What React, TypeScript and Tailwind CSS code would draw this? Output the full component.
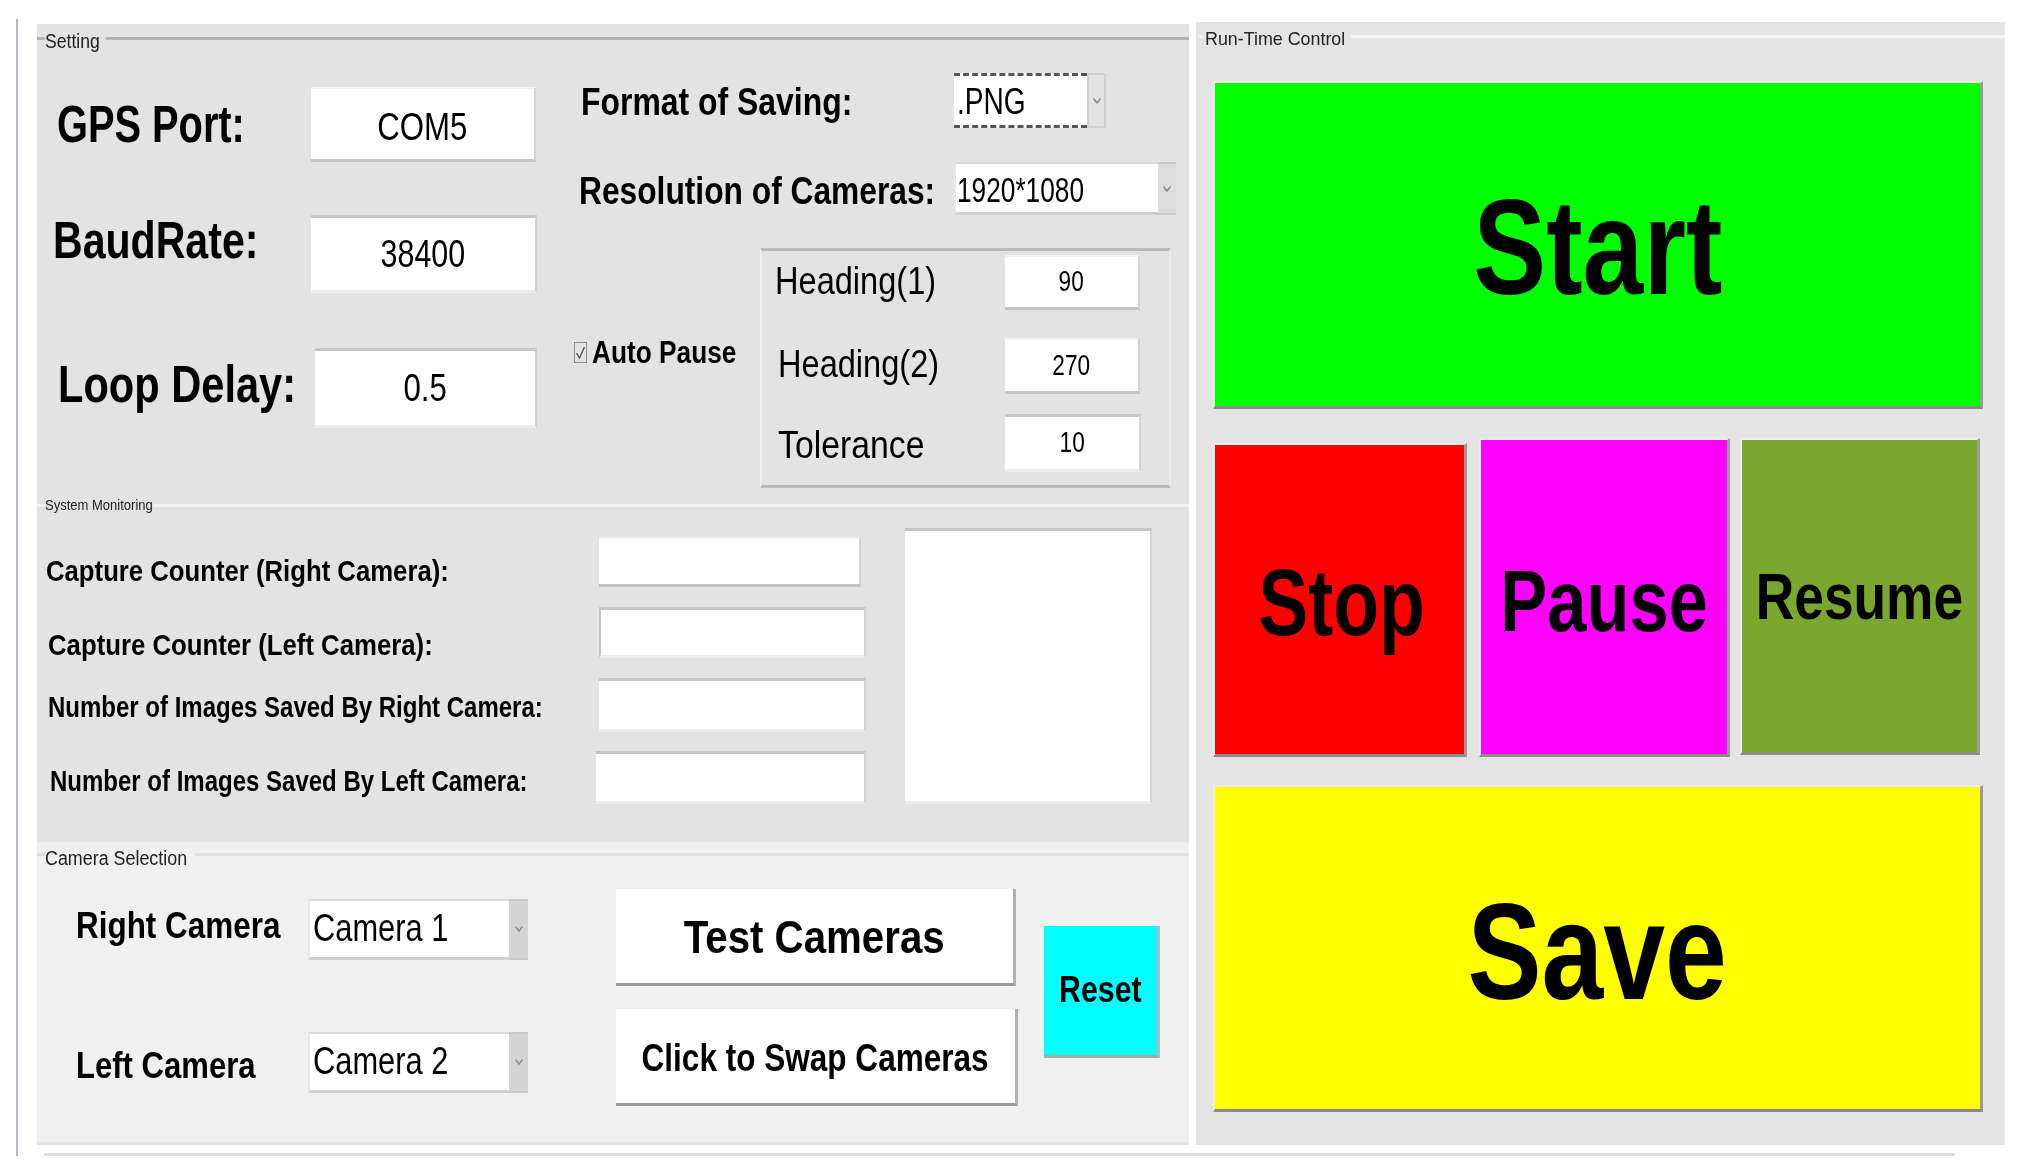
import React from "react";

const box = "bg-white border-b-[3px] border-r-2 border-b-[#c2c2c7] border-r-[#d2d2d6] border-t-2 border-t-[#f2f2f2]";
const boxTop = "bg-white border-t-[3px] border-r-2 border-t-[#c6c6ca] border-r-[#d2d2d6] border-b-[3px] border-b-[#ededed]";
const colorBtn = "flex items-center justify-center border-b-[3px] border-r-[3px] border-b-[#8a8a8a] border-r-[#9a9a9a] border-t-2 border-l-2 border-t-[#ededed] border-l-[#ededed] text-black font-bold whitespace-nowrap";

function Legend({ text, size, lead, className, line }: { text: string; size: string; lead: string; className: string; line: string }) {
  return (
    <div className={`flex items-center ${className}`}>
      <div className={`h-[3px] ${lead} ${line}`} />
      <span className={`whitespace-nowrap text-[#222] ${size}`}>{text}</span>
      <div className={`h-[3px] flex-1 ${line}`} />
    </div>
  );
}

function Chevron() {
  return (
    <svg width="10" height="8" viewBox="0 0 10 8" fill="none" stroke="#8a8a8a" strokeWidth="1.4">
      <path d="M1.5 1.5 L5 6 L8.5 1.5" />
    </svg>
  );
}

function Combo({ text, className, strip, textClass }: { text: string; className: string; strip: string; textClass: string }) {
  return (
    <div className={`flex ${className}`}>
      <div className="flex flex-1 items-center bg-white border-t-2 border-b-[3px] border-l-2 border-t-[#dcdcdc] border-b-[#d0d0d0] border-l-[#e8e8e8] pl-[3px]">
        <span className={`inline-block origin-left whitespace-nowrap ${textClass}`}>{text}</span>
      </div>
      <div className={`flex items-center justify-center border-y-2 border-y-[#c8c8c8] ${strip}`}>
        <Chevron />
      </div>
    </div>
  );
}

function Value({ text, className, textClass }: { text: string; className: string; textClass: string }) {
  return (
    <div className={`flex items-center justify-center ${className}`}>
      <span className={`inline-block whitespace-nowrap text-black ${textClass}`}>{text}</span>
    </div>
  );
}

export default function App() {
  return (
    <div className="relative flex h-[1171px] w-[2019px] overflow-hidden bg-white font-['Liberation_Sans',Arial,sans-serif] text-black blur-[0.7px]">
      {/* left rule */}
      <div className="ml-[16px] mt-[19px] h-[1137px] w-[2px] bg-[#b4b8c0]" />

      {/* left column */}
      <div className="ml-[19px] mt-[24px] flex h-[1121px] w-[1152px] flex-col">
        {/* Setting */}
        <section className="h-[477px] bg-[#e3e3e3]">
          <Legend text="Setting" size="text-[20px] inline-block scale-x-[0.88] origin-left w-[61px] translate-y-[3px]" lead="w-[8px]" line="bg-[#b4b4b8]" className="h-[28px]" />
          <div className="flex">
            <div className="flex w-[537px] flex-col">
              <div className="mt-[35px] flex h-[75px] items-center">
                <div className="ml-[20px] w-[254px] pt-[1px] text-[51px] font-bold"><span className="inline-block origin-left scale-x-[0.78] whitespace-nowrap">GPS Port:</span></div>
                <Value text="COM5" className={`h-[75px] w-[225px] ${box}`} textClass="text-[39px] scale-x-[0.8] translate-y-[3px]" />
              </div>
              <div className="mt-[53px] flex h-[78px] items-center">
                <div className="ml-[16px] w-[258px] pb-[28px] text-[52px] font-bold"><span className="inline-block origin-left scale-x-[0.79] whitespace-nowrap">BaudRate:</span></div>
                <Value text="38400" className={`h-[78px] w-[226px] ${boxTop}`} textClass="text-[38px] scale-x-[0.8]" />
              </div>
              <div className="mt-[55px] flex h-[80px] items-center">
                <div className="ml-[21px] w-[257px] pb-[8px] text-[52px] font-bold"><span className="inline-block origin-left scale-x-[0.8] whitespace-nowrap">Loop Delay:</span></div>
                <Value text="0.5" className={`h-[80px] w-[222px] ${boxTop}`} textClass="text-[39px] scale-x-[0.8]" />
              </div>
            </div>

            <div className="flex flex-col">
              <div className="mt-[21px] flex h-[55px] items-center">
                <div className="ml-[7px] w-[373px] pt-[4px] text-[38px] font-bold"><span className="inline-block origin-left scale-x-[0.84] whitespace-nowrap">Format of Saving:</span></div>
                <div className="flex h-[55px] w-[152px]">
                  <div className="flex w-[133px] items-center border-y-[3px] border-dashed border-[#555] bg-white pl-[3px]">
                    <span className="inline-block origin-left scale-x-[0.78] translate-y-[1px] whitespace-nowrap text-[36px]">.PNG</span>
                  </div>
                  <div className="flex flex-1 items-center justify-center border-2 border-[#cfcfd2] bg-[#e3e3e3]"><Chevron /></div>
                </div>
              </div>
              <div className="mt-[34px] flex h-[53px] items-center">
                <div className="ml-[5px] w-[375px] pt-[5px] text-[38px] font-bold"><span className="inline-block origin-left scale-x-[0.835] whitespace-nowrap">Resolution of Cameras:</span></div>
                <Combo text="1920*1080" className="h-[53px] w-[222px]" strip="w-[18px] bg-[#dcdcdc]" textClass="text-[35px] scale-x-[0.75] translate-y-[2px] -ml-[2px]" />
              </div>
              <div className="mt-[33px] flex">
                <div className="flex w-[186px] items-center self-start pt-[80px]">
                  <div className="flex h-[21px] w-[15px] items-center justify-center border border-[#8a8a8a]">
                    <svg width="11" height="15" viewBox="0 0 11 15" fill="none" stroke="#555" strokeWidth="1.4"><path d="M1.5 8 L4.5 13 L9.5 2" /></svg>
                  </div>
                  <span className="ml-[5px] inline-block origin-left scale-x-[0.82] whitespace-nowrap text-[32px] font-bold">Auto Pause</span>
                </div>
                <div className="flex h-[240px] w-[411px] flex-col border-y-[3px] border-l-2 border-r-2 border-y-[#b8b8bc] border-l-[#f0f0f0] border-r-[#ededed]">
                  <div className="mt-[4px] flex h-[55px] items-center">
                    <div className="ml-[13px] w-[230px] pb-[2px] text-[39px]"><span className="inline-block origin-left scale-x-[0.835] whitespace-nowrap">Heading(1)</span></div>
                    <Value text="90" className={`h-[55px] w-[135px] ${box}`} textClass="text-[29px] scale-x-[0.78]" />
                  </div>
                  <div className="mt-[28px] flex h-[56px] items-center">
                    <div className="ml-[16px] w-[227px] pb-[3px] text-[39px]"><span className="inline-block origin-left scale-x-[0.835] whitespace-nowrap">Heading(2)</span></div>
                    <Value text="270" className={`h-[56px] w-[135px] ${box}`} textClass="text-[29px] scale-x-[0.78]" />
                  </div>
                  <div className="mt-[20px] flex h-[58px] items-center">
                    <div className="ml-[16px] w-[227px] pt-[4px] text-[39px]"><span className="inline-block origin-left scale-x-[0.866] whitespace-nowrap">Tolerance</span></div>
                    <Value text="10" className={`h-[58px] w-[136px] ${boxTop}`} textClass="text-[29px] scale-x-[0.78]" />
                  </div>
                </div>
              </div>
            </div>
          </div>
        </section>

        {/* System Monitoring */}
        <section className="h-[342px] bg-[#e3e3e3]">
          <Legend text="System Monitoring" size="text-[14px] inline-block scale-x-[0.93] origin-left w-[108px]" lead="w-[8px]" line="bg-[#f2f2f2]" className="h-[10px]" />
          <div className="flex">
            <div className="flex w-[868px] flex-col">
              <div className="mt-[27px] flex h-[50px] items-center">
                <div className="ml-[9px] w-[553px] pt-[16px] text-[30px] font-bold"><span className="inline-block origin-left scale-x-[0.857] whitespace-nowrap">Capture Counter (Right Camera):</span></div>
                <div className={`h-[50px] w-[262px] ${box}`} />
              </div>
              <div className="mt-[20px] flex h-[51px] items-center">
                <div className="ml-[11px] w-[551px] pt-[24px] text-[30px] font-bold"><span className="inline-block origin-left scale-x-[0.858] whitespace-nowrap">Capture Counter (Left Camera):</span></div>
                <div className={`h-[51px] w-[267px] border-l-2 border-l-[#c6c6ca] ${boxTop}`} />
              </div>
              <div className="mt-[20px] flex h-[54px] items-center">
                <div className="ml-[11px] w-[551px] pt-[3px] text-[30px] font-bold"><span className="inline-block origin-left scale-x-[0.8] whitespace-nowrap">Number of Images Saved By Right Camera:</span></div>
                <div className={`h-[54px] w-[267px] ${boxTop}`} />
              </div>
              <div className="mt-[19px] flex h-[53px] items-center">
                <div className="ml-[13px] w-[546px] pt-[5px] text-[30px] font-bold"><span className="inline-block origin-left scale-x-[0.8] whitespace-nowrap">Number of Images Saved By Left Camera:</span></div>
                <div className={`h-[53px] w-[270px] ${boxTop}`} />
              </div>
            </div>
            <div className={`mt-[18px] h-[276px] w-[247px] ${boxTop}`} />
          </div>
        </section>

        {/* Camera Selection */}
        <section className="h-[304px] bg-[#f0f0f0] border-b-[3px] border-b-[#e4e4e4]">
          <Legend text="Camera Selection" size="text-[20px] inline-block scale-x-[0.894] origin-left w-[150px] translate-y-[3px]" lead="w-[8px]" line="bg-[#e0e0e0]" className="mt-[1px] h-[24px]" />
          <div className="flex">
            <div className="ml-[39px] flex w-[540px] flex-col">
              <div className="mt-[32px] flex h-[61px] items-center">
                <div className="w-[232px] pb-[6px] text-[37px] font-bold"><span className="inline-block origin-left scale-x-[0.85] whitespace-nowrap">Right Camera</span></div>
                <Combo text="Camera 1" className="h-[61px] w-[220px]" strip="w-[19px] bg-[#d4d4d4]" textClass="text-[39px] scale-x-[0.79]" />
              </div>
              <div className="mt-[72px] flex h-[61px] items-center">
                <div className="w-[232px] pt-[8px] text-[37px] font-bold"><span className="inline-block origin-left scale-x-[0.84] whitespace-nowrap">Left Camera</span></div>
                <Combo text="Camera 2" className="h-[61px] w-[220px]" strip="w-[19px] bg-[#d4d4d4]" textClass="text-[39px] scale-x-[0.79]" />
              </div>
            </div>
            <div className="flex flex-col">
              <div className="mt-[22px] flex h-[97px] w-[400px] items-center justify-center border-b-[3px] border-r-[3px] border-b-[#9a9a9a] border-r-[#b0b0b0] bg-white pt-[4px] text-[46px] font-bold">
                <span className="inline-block scale-x-[0.875] whitespace-nowrap">Test Cameras</span>
              </div>
              <div className="mt-[23px] flex h-[97px] w-[402px] items-center justify-center border-b-[3px] border-r-[3px] border-b-[#9a9a9a] border-r-[#b0b0b0] bg-white pt-[6px] text-[38px] font-bold">
                <span className="inline-block scale-x-[0.83] whitespace-nowrap">Click to Swap Cameras</span>
              </div>
            </div>
            <div className="ml-[26px] mt-[59px] flex h-[132px] w-[116px] items-center justify-center border-b-[3px] border-r-[3px] border-b-[#a8a8a8] border-r-[#b8b8b8] bg-[#00ffff] text-[37px] font-bold">
              <span className="inline-block scale-x-[0.82]">Reset</span>
            </div>
          </div>
        </section>
      </div>

      {/* right panel */}
      <div className="ml-[7px] mt-[22px] flex h-[1123px] w-[809px] flex-col bg-[#e4e4e4] pl-[17px]">
        <Legend text="Run-Time Control" size="text-[19px] inline-block scale-x-[0.94] origin-left w-[146px] translate-y-[3px] ml-[2px]" lead="-ml-[14px] w-[4px]" line="bg-[#f4f4f4]" className="h-[28px]" />
        <div className={`mt-[31px] h-[328px] w-[770px] pt-[8px] text-[135px] ${colorBtn} bg-[#00ff00]`}>
          <span className="inline-block scale-x-[0.81]">Start</span>
        </div>
        <div className="mt-[29px] flex items-end">
          <div className={`h-[314px] w-[254px] pl-[4px] pt-[6px] text-[95px] ${colorBtn} bg-[#ff0000]`}>
            <span className="inline-block scale-x-[0.79]">Stop</span>
          </div>
          <div className={`ml-[12px] h-[319px] w-[251px] pt-[8px] text-[87px] ${colorBtn} bg-[#ff00ff]`}>
            <span className="inline-block scale-x-[0.81]">Pause</span>
          </div>
          <div className={`ml-[10px] mb-[2px] h-[317px] w-[240px] pt-[2px] text-[65px] ${colorBtn} bg-[#7aa82f]`}>
            <span className="inline-block scale-x-[0.82]">Resume</span>
          </div>
        </div>
        <div className={`mt-[28px] h-[327px] w-[770px] pt-[6px] text-[138px] ${colorBtn} bg-[#ffff00]`}>
          <span className="inline-block scale-x-[0.805]">Save</span>
        </div>
      </div>

      {/* bottom rule: a thin line lying under the panels */}
      <div className="absolute left-[44px] top-[1153px] h-[3px] w-[1911px] bg-[#dcdcdc]" />
    </div>
  );
}
